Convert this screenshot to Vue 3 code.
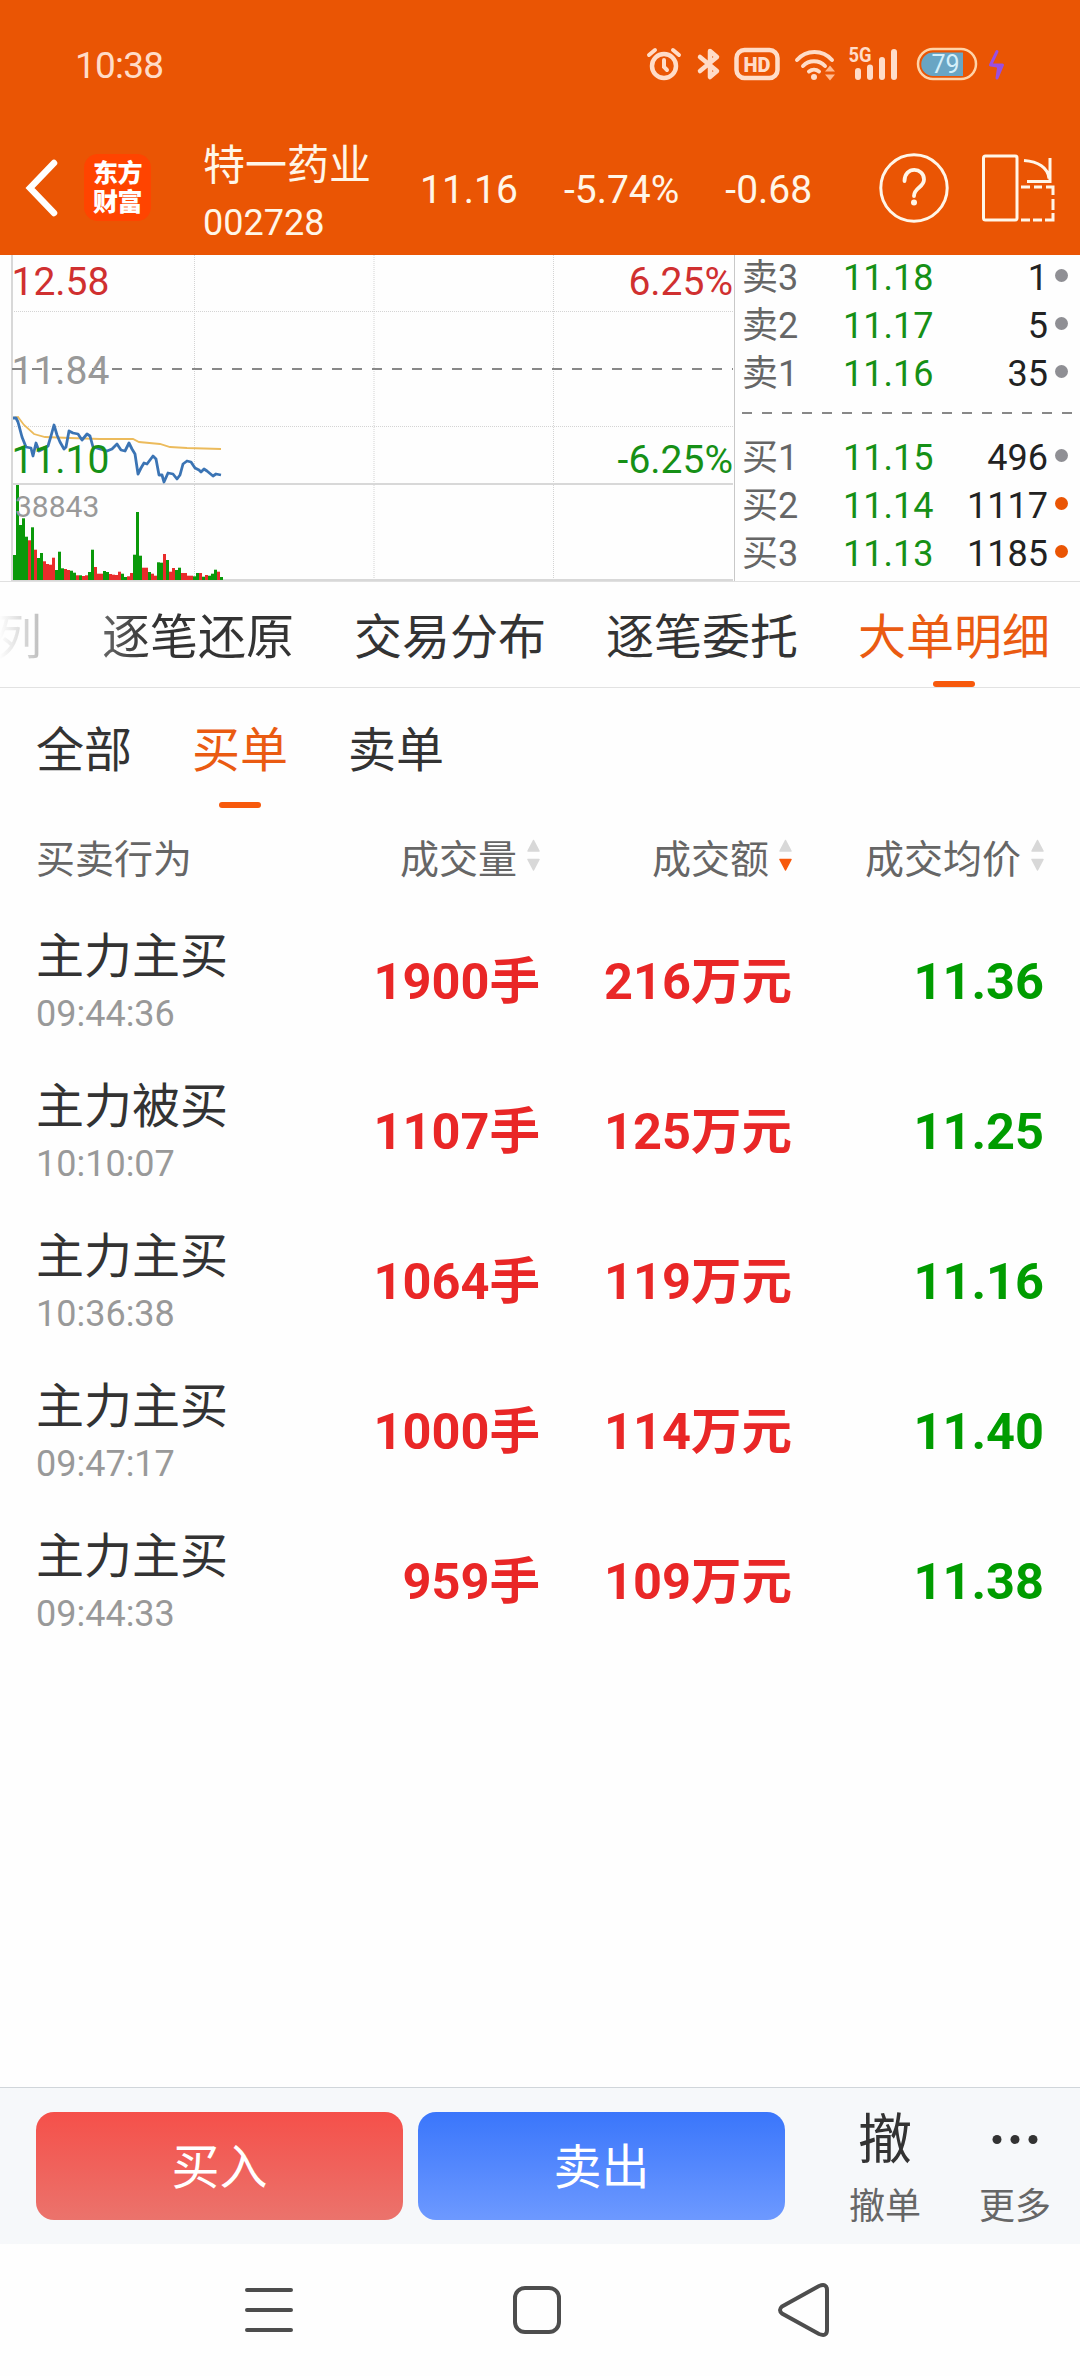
<script setup>
import { ref, computed } from 'vue';

const sells = [
  { label: '卖3', price: '11.18', qty: 1 },
  { label: '卖2', price: '11.17', qty: 5 },
  { label: '卖1', price: '11.16', qty: 35 }
];
const buys = [
  { label: '买1', price: '11.15', qty: 496 },
  { label: '买2', price: '11.14', qty: 1117, hot: true },
  { label: '买3', price: '11.13', qty: 1185, hot: true }
];

const tabs = ['列', '逐笔还原', '交易分布', '逐笔委托', '大单明细'];
const activeTab = ref('大单明细');

const filters = ['全部', '买单', '卖单'];
const activeFilter = ref('买单');

const columns = [
  { key: 'volume', title: '成交量' },
  { key: 'amount', title: '成交额' },
  { key: 'price', title: '成交均价' }
];
const sortKey = ref('amount');

const orders = [
  { type: '主力主买', time: '09:44:36', volume: '1900手', amount: '216万元', price: '11.36' },
  { type: '主力被买', time: '10:10:07', volume: '1107手', amount: '125万元', price: '11.25' },
  { type: '主力主买', time: '10:36:38', volume: '1064手', amount: '119万元', price: '11.16' },
  { type: '主力主买', time: '09:47:17', volume: '1000手', amount: '114万元', price: '11.40' },
  { type: '主力主买', time: '09:44:33', volume: '959手', amount: '109万元', price: '11.38' }
];

// volume bars: height in px, one letter per bar in `dirs` (g = down, r = up)
const volumes = [
  25, 95, 55, 61.7, 43.3, 39.7, 52.7, 30.3, 22, 27, 18.7, 16, 15.3, 22.3, 10, 28.3, 11.7, 11, 10, 9.3,
  7.3, 4.7, 4.7, 4, 4.7, 8, 30.3, 13, 6.3, 6.3, 9, 8, 6, 5.3, 5, 8.3, 6.3, 3, 3.7, 7,
  25.3, 68, 24.3, 12.3, 12.3, 8, 6.3, 4.3, 17.7, 17.3, 26, 20, 8.3, 12, 10, 12.3, 7, 7, 4.3, 4.3,
  3.7, 7, 7, 3.3, 5, 4.3, 6.3, 10.3, 8.3, 3
];
const dirs = 'gggggrgrggrrrrggg' + 'rrggrgrrgg' + 'rrrggrrrrg' + 'grrgggrrgr' + 'rggrgrrggrrrrggrgrgggrgr';

const bars = computed(() =>
  volumes.map((h, i) => ({ x: 13 + i * 3, y: 325 - h, h, up: dirs[i] === 'r' }))
);

const priceLine =
  '13,163 16,163 18,167 22,182 26,192 31,193 33,201 36,188 39,196 43,194 48,191 51,181 54,170 57,180 60,187 64,194 66,192 69,176 73,178 78,179 82,185 87,179 90,181 93,192 100,194 107,196 112,194 117,189 121,195 125,196 129,188 132,194 135,199 138,219 141,213 144,208 147,209 153,201 156,204 159,220 162,220 164,227 168,218 173,219 177,224 180,220 183,209 187,206 191,207 195,213 199,215 201,217 204,214 207,216 213,221 216,219 221,220';
const avgLine =
  '13,163 18,162 24,170 34,179 45,182 70,183 100,184 133,184 139,187 160,189 170,192 187,193 221,194';
</script>

<template>
  <div class="page">
    <header class="header">
      <div class="status">
        <span class="clock">10:38</span>
        <svg class="status-icons" width="364" height="40" viewBox="644 44 364 40">
          <g fill="none" stroke="#ffdcc8" stroke-width="4.5" stroke-linecap="round">
            <circle cx="663" cy="66" r="12" />
            <path d="M663 60v7l3 3M648 55l6-5M678 55l-6-5" stroke-width="4" />
            <path d="M699 57l17 14-7 6V51l7 6-17 14" stroke-width="4.5" stroke-linejoin="round" />
            <rect x="735.500" y="50" width="41" height="28" rx="8" />
            <path d="M796 60a23 23 0 0 1 35 0M802 66a15 15 0 0 1 22 0M808 71.500a8 8 0 0 1 10 0" stroke-width="4" />
          </g>
          <g fill="#ffdcc8">
            <circle cx="813" cy="77" r="3" />
            <path d="M824 71.500l5-6 5 6zM824 74.500l5 6 5-6z" fill="#ffb98f" />
            <text x="756" y="71.500" class="hd" text-anchor="middle">HD</text>
            <text x="847.500" y="62" class="net" textLength="23" lengthAdjust="spacingAndGlyphs">5G</text>
            <rect x="854" y="68" width="6" height="12" rx="3" />
            <rect x="866" y="64.500" width="6" height="15.500" rx="3" />
            <rect x="878" y="57" width="6" height="23" rx="3" />
            <rect x="890" y="49" width="6" height="31" rx="3" />
          </g>
          <rect x="917" y="49" width="58" height="30" rx="15" fill="none" stroke="#ffd3a8" stroke-width="2.500" />
          <path d="M962 52.500v23.500h-30a11.750 11.750 0 0 1 0-23.500z" fill="#69a5c4" />
          <text x="944.500" y="73" class="level" text-anchor="middle">79</text>
          <path d="M996 51.500l-6.500 13.500h12l-5.500 13 1.500-10-1-2-7-1z" class="bolt" />
        </svg>
      </div>

      <div class="titlebar">
        <svg class="back" width="34" height="60" viewBox="0 0 34 60">
          <path d="M29 5L5 30l24 25" />
        </svg>
        <div class="logo"><span>东方</span><span>财富</span></div>
        <div class="stock">
          <div class="stock-name">特一药业</div>
          <div class="stock-code">002728</div>
        </div>
        <div class="quotes">
          <span>11.16</span>
          <span>-5.74%</span>
          <span>-0.68</span>
        </div>
        <svg class="help" width="70" height="70" viewBox="0 0 70 70">
          <circle cx="35" cy="35" r="33.200" />
          <path d="M25.500 28c0-15 19.500-14 19.500-1.500 0 8-10 8-10 16.500" stroke-width="3.800" />
          <circle class="dot" cx="35" cy="49.500" r="3" />
        </svg>
        <svg class="rotate" width="74" height="70" viewBox="0 0 74 70">
          <rect x="2.500" y="3" width="33.500" height="64" rx="2" />
          <path d="M43 7.500c14 1 24 7 25 18M69 5v23.500H46" />
          <path d="M40 34h9M53 34h8M65 34h7v8M72 46v11M72 60v7h-8M61 67h-9M49 67h-9" />
        </svg>
      </div>
    </header>

    <section class="market">
      <svg class="chart" width="735" height="326" viewBox="0 0 735 326">
        <g class="grid">
          <path d="M12 56.500H734M12 171.500H734M194.500 0V325M374 0V325M553.500 0V325" />
        </g>
        <path class="frame" d="M12 0V326M12 229H733M12 325H733" />
        <path class="edge" d="M734.500 0V326" />
        <path class="zero" d="M12 114H733" />
        <text x="11.500" y="40" class="num red">12.58</text>
        <text x="11.500" y="129" class="num gray">11.84</text>
        <polyline class="avg" :points="avgLine" />
        <polyline class="price" :points="priceLine" />
        <text x="11.500" y="218" class="num green">11.10</text>
        <text x="733" y="40" class="num red" text-anchor="end">6.25%</text>
        <text x="733" y="218" class="num green" text-anchor="end">-6.25%</text>
        <rect
          v-for="(bar, i) in bars"
          :key="i"
          :x="bar.x"
          :y="bar.y"
          :height="bar.h"
          :class="bar.up ? 'bar-up' : 'bar-down'"
          width="3"
        />
        <text x="15" y="262" class="vol gray">38843</text>
      </svg>

      <div class="book">
        <div v-for="row in sells" :key="row.label" class="book-row">
          <span class="book-label">{{ row.label }}</span>
          <span class="book-price">{{ row.price }}</span>
          <span class="book-qty">{{ row.qty }}</span>
          <i class="book-dot"></i>
        </div>
        <svg class="book-split" width="330" height="36" viewBox="0 0 330 36">
          <path d="M0 14H330" />
        </svg>
        <div v-for="row in buys" :key="row.label" class="book-row">
          <span class="book-label">{{ row.label }}</span>
          <span class="book-price">{{ row.price }}</span>
          <span class="book-qty">{{ row.qty }}</span>
          <i class="book-dot" :class="{ hot: row.hot }"></i>
        </div>
      </div>
    </section>

    <nav class="tabs">
      <button
        v-for="(tab, i) in tabs"
        :key="tab"
        class="tab"
        :class="{ active: tab === activeTab, faded: i === 0, leading: i === 1 }"
        @click="activeTab = tab"
      >{{ tab }}</button>
    </nav>

    <nav class="filters">
      <button
        v-for="item in filters"
        :key="item"
        class="filter"
        :class="{ active: item === activeFilter }"
        @click="activeFilter = item"
      >{{ item }}</button>
    </nav>

    <main class="list">
      <div class="row list-head">
        <span>买卖行为</span>
        <span v-for="col in columns" :key="col.key" class="sortable" @click="sortKey = col.key">
          {{ col.title }}
          <svg width="13" height="33" viewBox="0 0 13 33">
            <path d="M6.500 1.500L12 12H1z" />
            <path d="M1 20.500h11L6.500 31z" :class="{ on: sortKey === col.key }" />
          </svg>
        </span>
      </div>
      <div v-for="order in orders" :key="order.time" class="row order">
        <div>
          <div class="order-type">{{ order.type }}</div>
          <div class="order-time">{{ order.time }}</div>
        </div>
        <span class="value up">{{ order.volume }}</span>
        <span class="value up">{{ order.amount }}</span>
        <span class="value down">{{ order.price }}</span>
      </div>
    </main>

    <footer class="actions">
      <button class="trade buy">买入</button>
      <button class="trade sell">卖出</button>
      <div class="action cancel">
        <span class="action-icon">撤</span>
        <span class="action-text">撤单</span>
      </div>
      <div class="action more">
        <svg class="action-icon" width="54" height="54" viewBox="0 0 54 54">
          <circle cx="9" cy="25.500" r="4.500" />
          <circle cx="27" cy="25.500" r="4.500" />
          <circle cx="45" cy="25.500" r="4.500" />
        </svg>
        <span class="action-text">更多</span>
      </div>
    </footer>

    <div class="sysnav">
      <svg width="54" height="60" viewBox="0 0 54 60">
        <path d="M5 10h44M5 30h44M5 50h44" />
      </svg>
      <svg width="54" height="60" viewBox="0 0 54 60">
        <rect x="5" y="8" width="44" height="44" rx="10" />
      </svg>
      <svg width="54" height="60" viewBox="0 0 54 60">
        <path d="M4 26.500L41 6q8-3 8 4v40q0 7-8 4L4 33.500q-4-3.500 0-7z" />
      </svg>
    </div>
  </div>
</template>

<style>
body {
  background: #fefefe;
}
</style>

<style scoped>
.page {
  width: 1080px;
  height: 2376px;
  display: flex;
  flex-direction: column;
  overflow: hidden;
  background: #fefefe;
  color: #333;
  font-family: Roboto, "Noto Sans CJK SC", sans-serif;
}

svg {
  display: block;
  flex: none;
}

button {
  border: none;
  padding: 0;
  background: none;
  font-family: inherit;
  color: inherit;
}

/* header */
.header {
  height: 255px;
  flex: none;
  background: #ea5504;
  color: #fff6e8;
}

.status {
  height: 127px;
  padding: 44px 71px 0 75px;
  box-sizing: border-box;
  display: flex;
  justify-content: space-between;
}

.clock {
  font-size: 37px;
  line-height: 44px;
  letter-spacing: -0.8px;
  color: #ffdcc8;
}

.hd {
  font-size: 20px;
  font-weight: 900;
}

.net {
  font-size: 20px;
  font-weight: 700;
}

.level {
  font-size: 25px;
  fill: #d5f0fa;
}

.bolt {
  fill: #9a4fe0;
  stroke: #9a4fe0;
  stroke-width: 3;
  stroke-linejoin: round;
}

.titlebar {
  height: 121px;
  display: flex;
  align-items: center;
  padding-left: 25px;
}

.back path {
  fill: none;
  stroke: #fff;
  stroke-width: 6.5;
  stroke-linecap: round;
}

.logo {
  width: 67px;
  height: 67px;
  margin-left: 25px;
  border-radius: 14px;
  background: #ff4400;
  color: #fff;
  display: flex;
  flex-direction: column;
  align-items: center;
  justify-content: center;
  font-size: 25px;
  font-weight: 900;
  line-height: 29px;
  letter-spacing: -0.5px;
}

.stock {
  width: 217px;
  margin-left: 52px;
  padding-top: 11px;
}

.stock-name {
  font-size: 42px;
  line-height: 60px;
}

.stock-code {
  font-size: 36px;
  line-height: 54px;
}

.quotes {
  width: 459px;
  display: flex;
  gap: 46px;
  font-size: 39px;
  padding-top: 4px;
}

.help {
  fill: none;
  stroke: #fff6e8;
  stroke-width: 3;
  stroke-linecap: round;
}

.help .dot {
  fill: #fff6e8;
  stroke: none;
}

.rotate {
  margin-left: 32px;
  fill: none;
  stroke: #fff6e8;
  stroke-width: 3;
}

/* chart + order book */
.market {
  height: 326px;
  flex: none;
  display: flex;
  border-bottom: 1px solid #e0e0e0;
}

.grid path {
  stroke: #d4d4d4;
  stroke-width: 1;
  stroke-dasharray: 1 1;
}

.frame {
  fill: none;
  stroke: #d8d8d8;
  stroke-width: 2;
}

.edge {
  stroke: #c8c8c8;
}

.zero {
  stroke: #888;
  stroke-width: 2;
  stroke-dasharray: 10 10;
}

.num {
  font-size: 39px;
}

.vol {
  font-size: 30px;
}

.red {
  fill: #d03030;
}

.green {
  fill: #169016;
}

.gray {
  fill: #999;
}

.avg {
  fill: none;
  stroke: #ecbb5c;
  stroke-width: 1.8;
}

.price {
  fill: none;
  stroke: #3b74b4;
  stroke-width: 2.8;
  stroke-linejoin: round;
}

.bar-up {
  fill: #e92c2c;
}

.bar-down {
  fill: #0a990a;
}

.book {
  flex: 1;
  padding-left: 7px;
}

.book-row {
  height: 48px;
  display: flex;
  align-items: center;
  font-size: 36px;
  line-height: 48px;
  position: relative;
  top: -1px;
}

.book-label {
  width: 101px;
  color: #666;
}

.book-price {
  width: 100px;
  color: #169016;
}

.book-qty {
  width: 105px;
  text-align: right;
  color: #222;
}

.book-dot {
  width: 13px;
  height: 13px;
  margin: 0 0 6px 7px;
  border-radius: 50%;
  background: #8f8f94;
}

.book-dot.hot {
  background: #ea5504;
}

.book-split path {
  stroke: #888;
  stroke-width: 2;
  stroke-dasharray: 10 10;
}

/* tabs */
.tabs {
  height: 105px;
  flex: none;
  display: flex;
  justify-content: flex-end;
  gap: 60px;
  padding-right: 30px;
  border-bottom: 1px solid #e2e2e2;
}

.tab,
.filter {
  flex: none;
  font-size: 48px;
  padding-bottom: 4px;
  position: relative;
}

.filter {
  padding-bottom: 5px;
}

.tab.faded {
  background: linear-gradient(90deg, #fff 10%, #bbb 100%);
  background-clip: text;
  color: transparent;
}

.tab.leading {
  background: linear-gradient(90deg, #666 0, #333 25%);
  background-clip: text;
  color: transparent;
}

.tab.active,
.filter.active {
  color: #ea5b12;
}

.tab.active::after,
.filter.active::after {
  content: '';
  position: absolute;
  left: 50%;
  bottom: 0;
  width: 42px;
  height: 6px;
  margin-left: -21px;
  border-radius: 3px;
  background: #f7590c;
}

.filters {
  height: 120px;
  flex: none;
  display: flex;
  gap: 60px;
  padding-left: 36px;
}

/* order list */
.list {
  flex: 1;
}

.row {
  display: grid;
  grid-template-columns: 240px 264px 252px 252px;
  padding-left: 36px;
}

.list-head {
  height: 99px;
  padding-bottom: 4px;
  box-sizing: border-box;
  align-items: center;
  font-size: 39px;
  color: #666;
}

.sortable {
  display: flex;
  align-items: center;
  justify-content: flex-end;
  gap: 10px;
}

.sortable path {
  fill: #d8d8d8;
  stroke: #d8d8d8;
  stroke-width: 1.5;
  stroke-linejoin: round;
}

.sortable .on {
  fill: #f7590c;
  stroke: #f7590c;
}

.order {
  height: 150px;
}

.order-type {
  font-size: 48px;
  line-height: 60px;
  margin-top: 20px;
}

.order-time {
  margin-top: 3px;
  font-size: 36px;
  line-height: 48px;
  color: #999;
}

.value {
  padding-top: 45px;
  font-size: 50.5px;
  line-height: 60px;
  font-weight: 700;
  text-align: right;
}

.up {
  color: #e92727;
}

.down {
  color: #009c00;
}

/* bottom bar */
.actions {
  height: 157px;
  flex: none;
  box-sizing: border-box;
  display: flex;
  align-items: flex-start;
  padding: 24px 0 0 36px;
  border-top: 1px solid #d0d5da;
  background: #f6f8fa;
}

.trade {
  width: 367px;
  height: 108px;
  padding-bottom: 6px;
  border-radius: 18px;
  color: #fff;
  font-size: 48px;
}

.buy {
  background: linear-gradient(#f5504a, #eb736c);
}

.sell {
  margin-left: 15px;
  background: linear-gradient(#3a76fb, #6d99ff);
}

.action {
  width: 80px;
  padding-top: 2px;
  display: flex;
  flex-direction: column;
  align-items: center;
}

.cancel {
  margin-left: 60px;
}

.more {
  margin-left: 50px;
}

.action-icon {
  height: 54px;
  font-size: 54px;
  line-height: 54px;
  fill: #333;
}

.action-text {
  margin-top: 15px;
  font-size: 36px;
  line-height: 48px;
  color: #666;
}

/* system navigation */
.sysnav {
  height: 132px;
  flex: none;
  display: flex;
  justify-content: center;
  align-items: center;
  gap: 214px;
  padding-right: 6px;
}

.sysnav svg {
  fill: none;
  stroke: #4d4d4d;
  stroke-width: 4;
  stroke-linecap: round;
}
</style>
